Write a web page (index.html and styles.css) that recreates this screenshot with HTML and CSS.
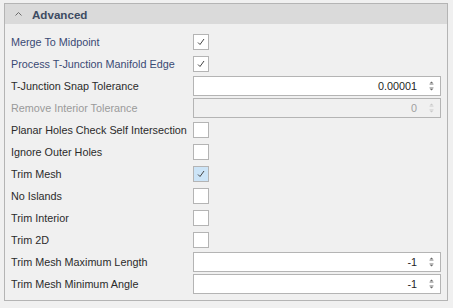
FILE: index.html
```html
<!DOCTYPE html>
<html>
<head>
<meta charset="utf-8">
<link rel="stylesheet" href="styles.css">
</head>
<body>
<div class="panel">
  <div class="header">
    <svg class="chev" width="7" height="4" viewBox="0 0 7 4"><path d="M0.5 3.5 L3.5 0.5 L6.5 3.5" fill="none" stroke="#6b6b6b" stroke-width="1"/></svg>
    <span class="title">Advanced</span>
  </div>
  <div class="rows">
    <div class="label mod">Merge To Midpoint</div>
    <div class="ctl"><span class="cb"><svg width="14" height="14" viewBox="0 0 14 14"><path d="M4 7.5 L6 9.5 L10 4" fill="none" stroke="#444" stroke-width="1"/></svg></span></div>

    <div class="label mod">Process T-Junction Manifold Edge</div>
    <div class="ctl"><span class="cb"><svg width="14" height="14" viewBox="0 0 14 14"><path d="M4 7.5 L6 9.5 L10 4" fill="none" stroke="#444" stroke-width="1"/></svg></span></div>

    <div class="label">T-Junction Snap Tolerance</div>
    <div class="ctl"><div class="spin"><span class="val">0.00001</span><svg class="arr" width="7" height="12" viewBox="0 0 7 12"><path d="M3.5 1.5 L5.5 3.5 L1.5 3.5 Z" fill="#666"/><rect x="1.5" y="4" width="4" height="1" fill="#bbb"/><rect x="1.5" y="7" width="4" height="1" fill="#bbb"/><path d="M1.5 8.5 L5.5 8.5 L3.5 10.5 Z" fill="#666"/></svg></div></div>

    <div class="label dis">Remove Interior Tolerance</div>
    <div class="ctl"><div class="spin off"><span class="val">0</span><svg class="arr" width="7" height="12" viewBox="0 0 7 12"><path d="M3.5 1.5 L5.5 3.5 L1.5 3.5 Z" fill="#c8c8c8"/><rect x="1.5" y="4" width="4" height="1" fill="#ddd"/><rect x="1.5" y="7" width="4" height="1" fill="#ddd"/><path d="M1.5 8.5 L5.5 8.5 L3.5 10.5 Z" fill="#c8c8c8"/></svg></div></div>

    <div class="label">Planar Holes Check Self Intersection</div>
    <div class="ctl"><span class="cb"></span></div>

    <div class="label">Ignore Outer Holes</div>
    <div class="ctl"><span class="cb"></span></div>

    <div class="label">Trim Mesh</div>
    <div class="ctl"><span class="cb on"><svg width="14" height="14" viewBox="0 0 14 14"><path d="M4 7.5 L6 9.5 L10 4" fill="none" stroke="#444" stroke-width="1"/></svg></span></div>

    <div class="label">No Islands</div>
    <div class="ctl"><span class="cb"></span></div>

    <div class="label">Trim Interior</div>
    <div class="ctl"><span class="cb"></span></div>

    <div class="label">Trim 2D</div>
    <div class="ctl"><span class="cb"></span></div>

    <div class="label">Trim Mesh Maximum Length</div>
    <div class="ctl"><div class="spin"><span class="val">-1</span><svg class="arr" width="7" height="12" viewBox="0 0 7 12"><path d="M3.5 1.5 L5.5 3.5 L1.5 3.5 Z" fill="#666"/><rect x="1.5" y="4" width="4" height="1" fill="#bbb"/><rect x="1.5" y="7" width="4" height="1" fill="#bbb"/><path d="M1.5 8.5 L5.5 8.5 L3.5 10.5 Z" fill="#666"/></svg></div></div>

    <div class="label">Trim Mesh Minimum Angle</div>
    <div class="ctl"><div class="spin"><span class="val">-1</span><svg class="arr" width="7" height="12" viewBox="0 0 7 12"><path d="M3.5 1.5 L5.5 3.5 L1.5 3.5 Z" fill="#666"/><rect x="1.5" y="4" width="4" height="1" fill="#bbb"/><rect x="1.5" y="7" width="4" height="1" fill="#bbb"/><path d="M1.5 8.5 L5.5 8.5 L3.5 10.5 Z" fill="#666"/></svg></div></div>
  </div>
</div>
</body>
</html>
```
FILE: styles.css
```css
html, body {
  margin: 0;
  padding: 0;
  background: #f0f0f0;
}
body {
  padding: 3px 5px 0 4px;
  font-family: "Liberation Sans", Arial, sans-serif;
  font-size: 10.8px;
  color: #2b2b2b;
}
.panel {
  border: 1px solid #b4b4b4;
  height: 296px;
  background: #f0f0f0;
}
.header {
  height: 20px;
  background: #dadada;
  display: flex;
  align-items: center;
  padding-left: 10px;
}
.chev {
  margin-right: 10px;
}
.title {
  font-weight: bold;
  font-size: 11.6px;
  color: #3d4b62;
}
.rows {
  display: grid;
  grid-template-columns: 182px 1fr;
  grid-auto-rows: 22px;
  padding: 7px 6px 0 6px;
}
.label {
  display: flex;
  align-items: center;
}
.label.mod {
  color: #3a4a74;
}
.label.dis {
  color: #9a9a9a;
}
.ctl {
  display: flex;
  align-items: center;
}
.cb {
  box-sizing: border-box;
  width: 16px;
  height: 16px;
  border: 1px solid #b4b4b4;
  background: #fff;
  display: flex;
  align-items: center;
  justify-content: center;
}
.cb.on {
  background: #cce4f7;
}
.spin {
  box-sizing: border-box;
  flex: 1;
  height: 20px;
  border: 1px solid #b4b4b4;
  background: #fff;
  display: flex;
  align-items: center;
  justify-content: flex-end;
  padding-right: 5px;
}
.spin .val {
  margin-right: 11px;
  color: #1e1e1e;
}
.spin.off {
  background: #f0f0f0;
}
.spin.off .val {
  color: #a0a0a0;
}
```
